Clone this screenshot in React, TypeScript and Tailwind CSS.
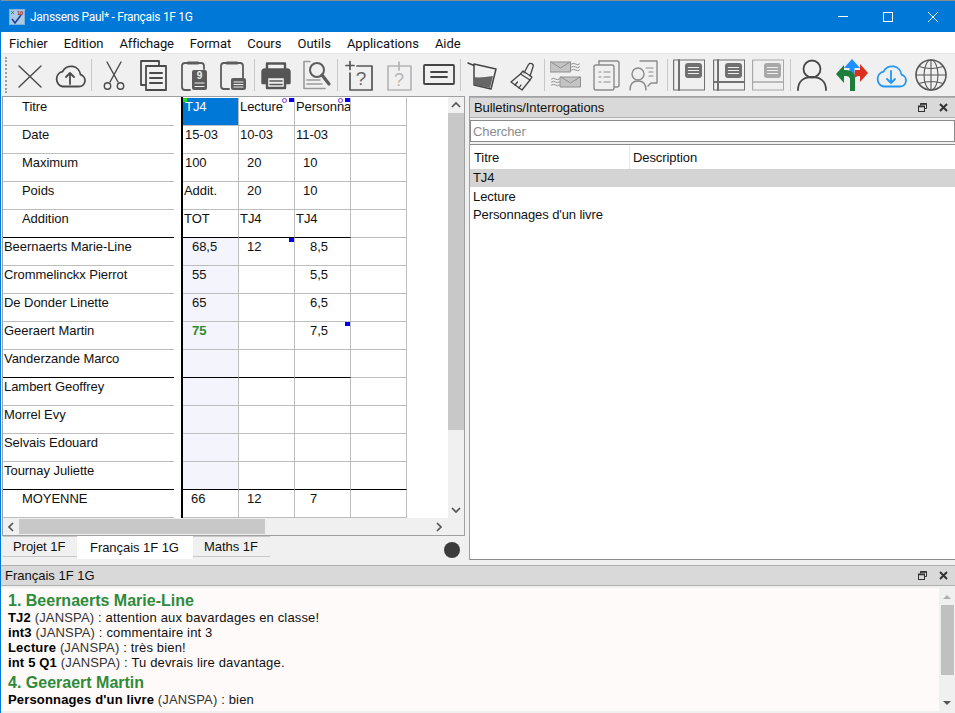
import type { ReactNode } from "react";

const ink = "#4a4a4a";

function Ic({ children, color = ink, sw = 1.6 }: { children: ReactNode; color?: string; sw?: number }) {
	return (
		<svg viewBox="0 0 32 32" className="h-8 w-8 shrink-0" fill="none" stroke={color} strokeWidth={sw} strokeLinecap="round" strokeLinejoin="round">
			{children}
		</svg>
	);
}

const cloud = "M8.5 27.5h16.5a6 6 0 0 0 1.5-11.8 9.5 9.5 0 0 0-18-3 7.6 7.6 0 0 0 0 14.8z";

function BookIcon({ mode, color }: { mode: number; color: string }) {
	return (
		<Ic color={color} sw={1.2}>
			<rect x="0.6" y="1" width="31" height="30" />
			{mode === 0 && <path d="M6 1v30" strokeWidth={2} />}
			{mode === 1 && <path d="M5 1v30M1 23h30" strokeWidth={2} />}
			{mode === 2 && <path d="M1 23h30" strokeWidth={1.6} />}
			<rect x="12" y="4" width="17" height="15" rx="3" fill={color} stroke="none" />
			<path d="M15.5 8.5h10M15.5 11.5h10M15.5 14.5h10" stroke="#f0f0f0" strokeWidth={1.2} />
		</Ic>
	);
}

const toolbar: ReactNode[][] = [
	[
		<Ic key="x" sw={1.4}><path d="M5 7l22 21M27 7L5 28" /></Ic>,
		<Ic key="up" sw={1.8}><path d={cloud} /><path d="M16 25V14M12 18l4-4 4 4" /></Ic>,
	],
	[
		<Ic key="cut" sw={1.4}><path d="M9 3l11 20M23 3L12 23" /><circle cx="9.5" cy="27" r="3.2" /><circle cx="22.5" cy="27" r="3.2" /></Ic>,
		<Ic key="copy" sw={1.8}><path d="M22 6V2H4v24h5" /><rect x="9" y="7" width="20" height="24" fill="#f0f0f0" /><path d="M13 14h12M13 19h12M13 24h12" strokeWidth={2} /></Ic>,
		<Ic key="clip9" color="#5c5c5c" sw={1.8}>
			<path d="M13 31H8a3 3 0 0 1-3-3V7a3 3 0 0 1 3-3h16a3 3 0 0 1 3 3v3" />
			<path d="M11 4h10" strokeWidth={3} />
			<rect x="15" y="11" width="15" height="20" rx="2" fill="#5c5c5c" stroke="none" />
			<text x="22.5" y="20" fontFamily="Liberation Sans" fontSize="10" fontWeight="700" fill="#f0f0f0" stroke="none" textAnchor="middle">9</text>
			<path d="M18 24h9M18 27.5h9" stroke="#f0f0f0" strokeWidth={1.2} />
		</Ic>,
		<Ic key="clip" color="#5c5c5c" sw={1.8}>
			<path d="M13 30H8a3 3 0 0 1-3-3V7a3 3 0 0 1 3-3h16a3 3 0 0 1 3 3v12" />
			<path d="M11 4h10" strokeWidth={3} />
			<rect x="15" y="19" width="15" height="12" rx="2" fill="#5c5c5c" stroke="none" />
			<path d="M18 23h9M18 25.5h9M18 28h9" stroke="#f0f0f0" strokeWidth={1.1} />
		</Ic>,
	],
	[
		<Ic key="print" color="#555" sw={2.4}>
			<path d="M7 11V4.5h18V11" />
			<path d="M7 24H2.5V13a2.5 2.5 0 0 1 2.5-2.5h22a2.5 2.5 0 0 1 2.5 2.5v11H25" fill="#555" />
			<rect x="7" y="18" width="18" height="11" fill="#f0f0f0" />
			<path d="M10 22h12M10 25.5h12" strokeWidth={1.6} />
		</Ic>,
		<Ic key="find" color="#5c5c5c" sw={1.6}>
			<path d="M10 2.5H4v27h21" stroke="#9a9a9a" />
			<circle cx="17" cy="11" r="7" strokeWidth={2} />
			<path d="M22 16l7 9" strokeWidth={3.2} />
			<path d="M7 21h13M7 25h15" stroke="#9a9a9a" />
		</Ic>,
	],
	[
		<Ic key="qplus" color="#555" sw={1.7}>
			<path d="M2 6.5h8M6 2.5v8" />
			<path d="M13 7h15v24H6V14" />
			<text x="17" y="26" fontFamily="Liberation Sans" fontSize="19" fill="#666" stroke="none" textAnchor="middle">?</text>
		</Ic>,
		<Ic key="qplus2" color="#b5b5b5" sw={1.7}>
			<path d="M12 7h8M16 3v8" />
			<path d="M21 7h7v24H5V7h6" />
			<text x="16" y="27" fontFamily="Liberation Sans" fontSize="18" fill="#b5b5b5" stroke="none" textAnchor="middle">?</text>
		</Ic>,
		<Ic key="field" color="#444" sw={1.8}><rect x="1" y="6" width="30" height="19" rx="1" /><path d="M8 13h16M8 18h16" /></Ic>,
	],
	[
		<Ic key="bucket" color="#444" sw={1.5}>
			<path d="M1 4l6 2.5M7 5l22 5-5 20-17-4z" />
			<path d="M6 18c6 1 12 0 20-1l-3 12-15-3z" fill="#666" stroke="none" />
		</Ic>,
		<Ic key="brush" color="#444" sw={1.3}>
			<path d="M18 14l4.5-8.5a2.6 2.6 0 0 1 4.6 2.3L24 17" />
			<path d="M17 12l9 6-2 3-9.5-6z" />
			<path d="M14.5 15L5 23l11 8 8-10" />
			<path d="M9 26l2.5-3M13 29l2-3" />
		</Ic>,
	],
	[
		<Ic key="mails" color="#8e8e8e" sw={1}>
			<rect x="0.5" y="3" width="20" height="10" fill="#c4c4c4" />
			<path d="M1 3l9.5 6 9.5-6" />
			<path d="M21.5 5q2 -1.5 4 0t4 0M21.5 8q2 -1.5 4 0t4 0M21.5 11q2 -1.5 4 0t4 0" />
			<rect x="10.5" y="18" width="20" height="10" fill="#c4c4c4" />
			<path d="M11 18l9.5 6 9.5-6" />
			<path d="M1.5 20q2 -1.5 4 0t4 0M1.5 23q2 -1.5 4 0t4 0M1.5 26q2 -1.5 4 0t4 0" />
		</Ic>,
		<Ic key="docs" color="#8a8a8a" sw={1.4}>
			<path d="M9 2h18a2 2 0 0 1 2 2v22a2 2 0 0 1-2 2h-3" />
			<path d="M9 2v4" />
			<rect x="4" y="6" width="20" height="25" rx="2" fill="#f0f0f0" />
			<path d="M9 13h2M14 13h6M9 18h2M14 18h6M9 23h2M14 23h6" strokeWidth={1.2} />
		</Ic>,
		<Ic key="persondoc" color="#8a8a8a" sw={1.4}>
			<path d="M11 2h17v22h-6l-3 3" />
			<path d="M17 9h7M20 13h4M20 17h4" strokeWidth={1.2} />
			<circle cx="9" cy="15" r="6" fill="#f0f0f0" />
			<path d="M1 31c0-6 3-9 8-9s8 3 8 9" />
		</Ic>,
	],
	[<BookIcon key="b0" mode={0} color="#707070" />, <BookIcon key="b1" mode={1} color="#707070" />, <BookIcon key="b2" mode={2} color="#a8a8a8" />],
	[
		<Ic key="user" color="#484848" sw={1.8}><circle cx="16" cy="10" r="8.5" /><path d="M2 31c0-9 6-13 14-13s14 4 14 13" /></Ic>,
		<svg key="arrows" viewBox="0 0 32 32" className="h-8 w-8 shrink-0">
			<path d="M16 0l-8 9h5.5v10h5V9H24z" fill="#1e90ff" />
			<path d="M19 11h5V5l8 9-8 9v-6h-1c-2 0-4 1-5 3z" fill="#dc2f1e" />
			<path d="M0 15l8-9v5h2c5 0 9 3 9 8v13h-5V20c0-2-2-3-4-3H8v7z" fill="#1b7f3b" />
		</svg>,
		<Ic key="down" color="#2196f3" sw={1.8}><path d={cloud} /><path d="M16 12v12M12 20l4 4 4-4" /></Ic>,
		<Ic key="globe" color="#585858" sw={1.1}>
			<circle cx="16" cy="16" r="15" strokeWidth={1.6} />
			<ellipse cx="16" cy="16" rx="7" ry="15" />
			<path d="M16 1v30M1 16h30M4 7.5q12 4 24 0M4 24.5q12-4 24 0" />
		</Ic>,
	],
];

function Toolbar() {
	return (
		<div className="flex h-[43px] items-center border-t border-[#e6e6e6] bg-[#f0f0f0]">
			<div className="ml-[4px] mr-[6px] h-[36px] w-[3px] border-l-2 border-dotted border-[#a0a0a0]" />
			{toolbar.map((group, i) => (
				<div key={i} className="flex items-center">
					{i > 0 && <div className="mx-[5.5px] h-[32px] w-px bg-[#c8c8c8]" />}
					<div className="flex gap-[7.5px]">{group}</div>
				</div>
			))}
		</div>
	);
}

type Cell = { t?: string; pad?: string; cls?: string };

const plain = "pl-[2px]";
const tight = "pl-px";
const mid = "pl-[9px]";
const mid2 = "pl-[8px]";
const wide = "pl-[15px]";

const gridRows: { name: string; indent?: boolean; line?: "short" | "long"; student?: boolean; cells: Cell[] }[] = [
	{ name: "Titre", indent: true, cells: [{ t: "TJ4", pad: plain, cls: "bg-[#0078d7] text-white" }, { t: "Lecture", pad: tight }, { t: "Personnages d'un livre", pad: tight }, {}] },
	{ name: "Date", indent: true, cells: [{ t: "15-03", pad: plain }, { t: "10-03", pad: tight }, { t: "11-03", pad: tight }, {}] },
	{ name: "Maximum", indent: true, cells: [{ t: "100", pad: plain }, { t: "20", pad: mid2 }, { t: "10", pad: mid2 }, {}] },
	{ name: "Poids", indent: true, cells: [{ t: "Addit.", pad: tight }, { t: "20", pad: mid2 }, { t: "10", pad: mid2 }, {}] },
	{ name: "Addition", indent: true, line: "short", cells: [{ t: "TOT", pad: tight }, { t: "TJ4", pad: tight }, { t: "TJ4", pad: tight }, {}] },
	{ name: "Beernaerts Marie-Line", student: true, cells: [{ t: "68,5", pad: mid }, { t: "12", pad: mid2 }, { t: "8,5", pad: wide }, {}] },
	{ name: "Crommelinckx Pierrot", student: true, cells: [{ t: "55", pad: mid }, {}, { t: "5,5", pad: wide }, {}] },
	{ name: "De Donder Linette", student: true, cells: [{ t: "65", pad: mid }, {}, { t: "6,5", pad: wide }, {}] },
	{ name: "Geeraert Martin", student: true, cells: [{ t: "75", pad: mid, cls: "font-bold text-[#2e8b2e]" }, {}, { t: "7,5", pad: wide }, {}] },
	{ name: "Vanderzande Marco", student: true, line: "short", cells: [{}, {}, {}, {}] },
	{ name: "Lambert Geoffrey", student: true, cells: [{}, {}, {}, {}] },
	{ name: "Morrel Evy", student: true, cells: [{}, {}, {}, {}] },
	{ name: "Selvais Edouard", student: true, cells: [{}, {}, {}, {}] },
	{ name: "Tournay Juliette", student: true, line: "long", cells: [{}, {}, {}, {}] },
	{ name: "MOYENNE", indent: true, cells: [{ t: "66", pad: mid2 }, { t: "12", pad: mid2 }, { t: "7", pad: wide }, {}] },
];

function Mark({ cls }: { cls: string }) {
	return <span className={`absolute ${cls}`} />;
}

function Grid() {
	return (
		<div className="h-full overflow-hidden bg-white font-['Liberation_Sans',Arial,sans-serif] text-[13px] leading-[16px] tracking-[-0.05px] text-[#111]">
			<div className="flex h-px">
				<div className="ml-[178px] w-[2px] bg-black" />
			</div>
			{gridRows.map((r, ri) => {
				const black = r.line ? "border-b-black" : "border-b-[#bdbdbd]";
				return (
					<div key={r.name} className="flex h-[28px]">
						<div className={`w-[171px] shrink-0 overflow-hidden whitespace-nowrap border-b pt-px ${black} ${r.indent ? "pl-[19px]" : "pl-px"}`}>{r.name}</div>
						<div className="w-[7px] shrink-0" />
						<div className="w-[2px] shrink-0 bg-black" />
						{r.cells.map((c, ci) => {
							const lineCls = ci === 3 && r.line !== "long" ? "border-b-[#bdbdbd]" : black;
							const tint = r.student && ci === 0 ? "bg-[#f3f4fc]" : "";
							return (
								<div key={ci} className={`relative h-[28px] w-[56px] shrink-0 overflow-hidden whitespace-nowrap border-b border-r border-r-[#bdbdbd] pt-px ${lineCls} ${tint} ${c.pad ?? ""} ${c.cls ?? ""}`}>
									{c.t}
									{ri === 0 && ci === 0 && <Mark cls="left-0 top-0 h-[4px] w-[4px] bg-[#22dd22]" />}
									{ri === 0 && (ci === 1 || ci === 2) && <Mark cls="right-[0px] top-0 h-[4px] w-[5px] bg-[#0000ee]" />}
									{ri === 0 && (ci === 1 || ci === 2) && <Mark cls="right-[7px] top-0 h-[5px] w-[5px] rounded-full border border-[#8a2be2]" />}
									{((ri === 5 && ci === 1) || (ri === 8 && ci === 2)) && <Mark cls="right-0 top-0 h-[4px] w-[5px] bg-[#0000ee]" />}
								</div>
							);
						})}
					</div>
				);
			})}
		</div>
	);
}

function Chevron({ d }: { d: string }) {
	return (
		<svg viewBox="0 0 10 10" className="h-[10px] w-[10px]" fill="none" stroke="#555" strokeWidth={1.7}>
			<path d={d} />
		</svg>
	);
}

function LeftPane() {
	return (
		<div className="flex w-[468px] shrink-0 flex-col">
			<div className="ml-px flex h-[440px] w-[463px] flex-col border border-[#a0a0a0] bg-[#f0f0f0]">
				<div className="flex min-h-0 flex-1">
					<div className="min-w-0 flex-1 bg-white">
						<Grid />
					</div>
					<div className="flex w-[16px] shrink-0 flex-col bg-[#f0f0f0]">
						<div className="flex h-[16px] items-center justify-center"><Chevron d="M1 7l4-4 4 4" /></div>
						<div className="h-[317px] bg-[#c8c8c8]" />
						<div className="flex-1" />
						<div className="flex h-[17px] items-center justify-center"><Chevron d="M1 3l4 4 4-4" /></div>
					</div>
				</div>
				<div className="flex h-[17px] shrink-0 items-center bg-[#f0f0f0]">
					<div className="flex w-[16px] justify-center"><Chevron d="M7 1L3 5l4 4" /></div>
					<div className="h-[15px] w-[246px] bg-[#c8c8c8]" />
					<div className="flex-1" />
					<div className="mr-[17px] flex w-[16px] justify-center"><Chevron d="M3 1l4 4-4 4" /></div>
				</div>
			</div>
			<div className="flex h-[24px] items-start pl-[2px] font-['Liberation_Sans',Arial,sans-serif] text-[13px] tracking-[-0.05px] text-[#111]">
				<div className="flex h-[21px] w-[74px] items-center border-t border-b border-[#c8c8c8] pl-[10px]">Projet 1F</div>
				<div className="flex h-[23px] w-[116px] items-center bg-white pl-[13px]">Français 1F 1G</div>
				<div className="flex h-[21px] w-[77px] items-center border-t border-b border-[#c8c8c8] pl-[11px]">Maths 1F</div>
				<div className="flex-1" />
				<div className="mr-[9px] mt-[6px] h-[16px] w-[16px] rounded-full bg-[#3c3c3c]" />
			</div>
		</div>
	);
}

function PanelHeader({ title }: { title: string }) {
	return (
		<div className="flex h-[21px] shrink-0 items-center border-y border-[#b0b0b0] bg-[#d9d9d9] pl-[4px] pr-[7px] text-[#111]">
			<span className="flex-1 pt-px">{title}</span>
			<svg viewBox="0 0 9 9" className="mr-[12px] h-[9px] w-[9px]" fill="none" stroke="#333" strokeWidth={1}>
				<path d="M2.5 2.5V.5h6v5h-2" />
				<path d="M2.5 1h6" strokeWidth={1.6} />
				<rect x="0.5" y="3" width="6" height="5.5" />
				<path d="M0.5 3.6h6" strokeWidth={1.4} />
			</svg>
			<svg viewBox="0 0 9 9" className="h-[9px] w-[9px]" fill="none" stroke="#333" strokeWidth={2}>
				<path d="M1 1l7 7M8 1L1 8" />
			</svg>
		</div>
	);
}

function RightPane() {
	return (
		<div className="flex h-[464px] min-w-0 flex-1 flex-col border-l border-[#a0a0a0] font-['Liberation_Sans',Arial,sans-serif] text-[13px] tracking-[-0.09px]">
			<div className="h-px shrink-0 bg-[#a0a0a0]" />
			<PanelHeader title="Bulletins/Interrogations" />
			<div className="my-[2px] flex h-[22px] shrink-0 items-center border border-[#8a8a8a] bg-white pl-[2px] pt-px text-[#8c8c8c]">Chercher</div>
			<div className="flex-1 border-y border-[#8a8a8a] bg-white text-[#111]">
				<div className="flex h-[24px] items-center">
					<div className="w-[159px] pl-[4px] pt-px">Titre</div>
					<div className="h-full w-px bg-[#e8e8e8]" />
					<div className="pl-[3px] pt-px">Description</div>
				</div>
				<div className="flex h-[18px] items-center bg-[#d4d4d4] pl-[3px]">TJ4</div>
				<div className="flex h-[19px] items-center pl-[3px]">Lecture</div>
				<div className="flex h-[18px] items-center pl-[3px]">Personnages d'un livre</div>
			</div>
		</div>
	);
}

function Note({ who, text }: { who: string; text: string }) {
	return (
		<div className="h-[15px] whitespace-nowrap tracking-[0.16px]">
			<b className="text-black">{who}</b> <span className="text-[#333]">(JANSPA)</span> : {text}
		</div>
	);
}

function BottomPane() {
	return (
		<div className="flex h-[148px] min-h-0 flex-col font-['Liberation_Sans',Arial,sans-serif] text-[13px]">
			<PanelHeader title="Français 1F 1G" />
			<div className="mt-[2px] flex h-[123px] min-h-0">
				<div className="min-w-0 flex-1 bg-[#fefaf9] pl-[7px] pt-[3px] leading-[15px] text-[#111]">
					<div className="h-[19px] text-[16px] font-bold leading-[20px] text-[#2e8b3a]">1. Beernaerts Marie-Line</div>
					<Note who="TJ2" text="attention aux bavardages en classe!" />
					<Note who="int3" text="commentaire int 3" />
					<Note who="Lecture" text="très bien!" />
					<Note who="int 5 Q1" text="Tu devrais lire davantage." />
					<div className="mt-[3px] h-[19px] text-[16px] font-bold leading-[20px] text-[#2e8b3a]">4. Geeraert Martin</div>
					<Note who="Personnages d'un livre" text="bien" />
				</div>
				<div className="flex w-[16px] shrink-0 flex-col items-center bg-[#f0f0f0]">
					<div className="mt-[7px] h-0 w-0 border-x-[4px] border-b-[4px] border-x-transparent border-b-[#b0b0b0]" />
					<div className="mt-[6px] h-[70px] w-[13px] bg-[#c0c0c0]" />
					<div className="flex-1" />
					<div className="mb-[6px] h-0 w-0 border-x-[4px] border-t-[4px] border-x-transparent border-t-[#555]" />
				</div>
			</div>
		</div>
	);
}

const menus = [
	{ label: "Fichier", cls: "" },
	{ label: "Edition", cls: "" },
	{ label: "Affichage", cls: "tracking-[-0.2px]" },
	{ label: "Format", cls: "" },
	{ label: "Cours", cls: "" },
	{ label: "Outils", cls: "" },
	{ label: "Applications", cls: "" },
	{ label: "Aide", cls: "" },
];

export default function App() {
	return (
		<div className="flex h-[713px] w-[955px] flex-col overflow-hidden border-l border-[#0078d7] bg-[#f0f0f0]">
			<div className="h-px shrink-0 bg-[#8c8c8c]" />
			<div className="flex h-[31px] shrink-0 items-center bg-[#0078d7] font-['Roboto',sans-serif] text-[12px] tracking-[-0.3px] text-white">
				<svg viewBox="0 0 16 16" className="ml-[8px] mr-[5px] h-4 w-4">
					<rect width="16" height="16" fill="#7fb2dc" />
					<rect x="1" y="1" width="14" height="14" fill="#a9c9e4" />
					<path d="M3 10l3 4 6-8" fill="none" stroke="#1a3f9a" strokeWidth={1.6} />
					<path d="M2 2l3 3M5 2L2 5" stroke="#2e8b3a" strokeWidth={1} />
					<text x="8" y="6" fontFamily="Liberation Sans" fontSize="6" fontWeight="700" fill="#a03030">10</text>
				</svg>
				<span className="flex-1">Janssens Paul* - Français 1F 1G</span>
				<div className="flex w-[45px] justify-center"><div className="h-px w-[10px] bg-white" /></div>
				<div className="flex w-[45px] justify-center"><div className="h-[10px] w-[10px] border border-white" /></div>
				<div className="flex w-[45px] justify-center">
					<svg viewBox="0 0 10 10" className="h-[10px] w-[10px]" stroke="white" strokeWidth={1}><path d="M0 0l10 10M10 0L0 10" /></svg>
				</div>
			</div>
			<div className="flex h-[21px] shrink-0 items-center gap-[16px] bg-white pl-[8px] pt-[2px] font-['Roboto',sans-serif] text-[13px] text-[#111]">
				{menus.map((m) => (
					<span key={m.label} className={m.cls}>{m.label}</span>
				))}
			</div>
			<Toolbar />
			<div className="flex shrink-0">
				<LeftPane />
				<RightPane />
			</div>
			<div className="h-[5px] shrink-0" />
			<BottomPane />
		</div>
	);
}
